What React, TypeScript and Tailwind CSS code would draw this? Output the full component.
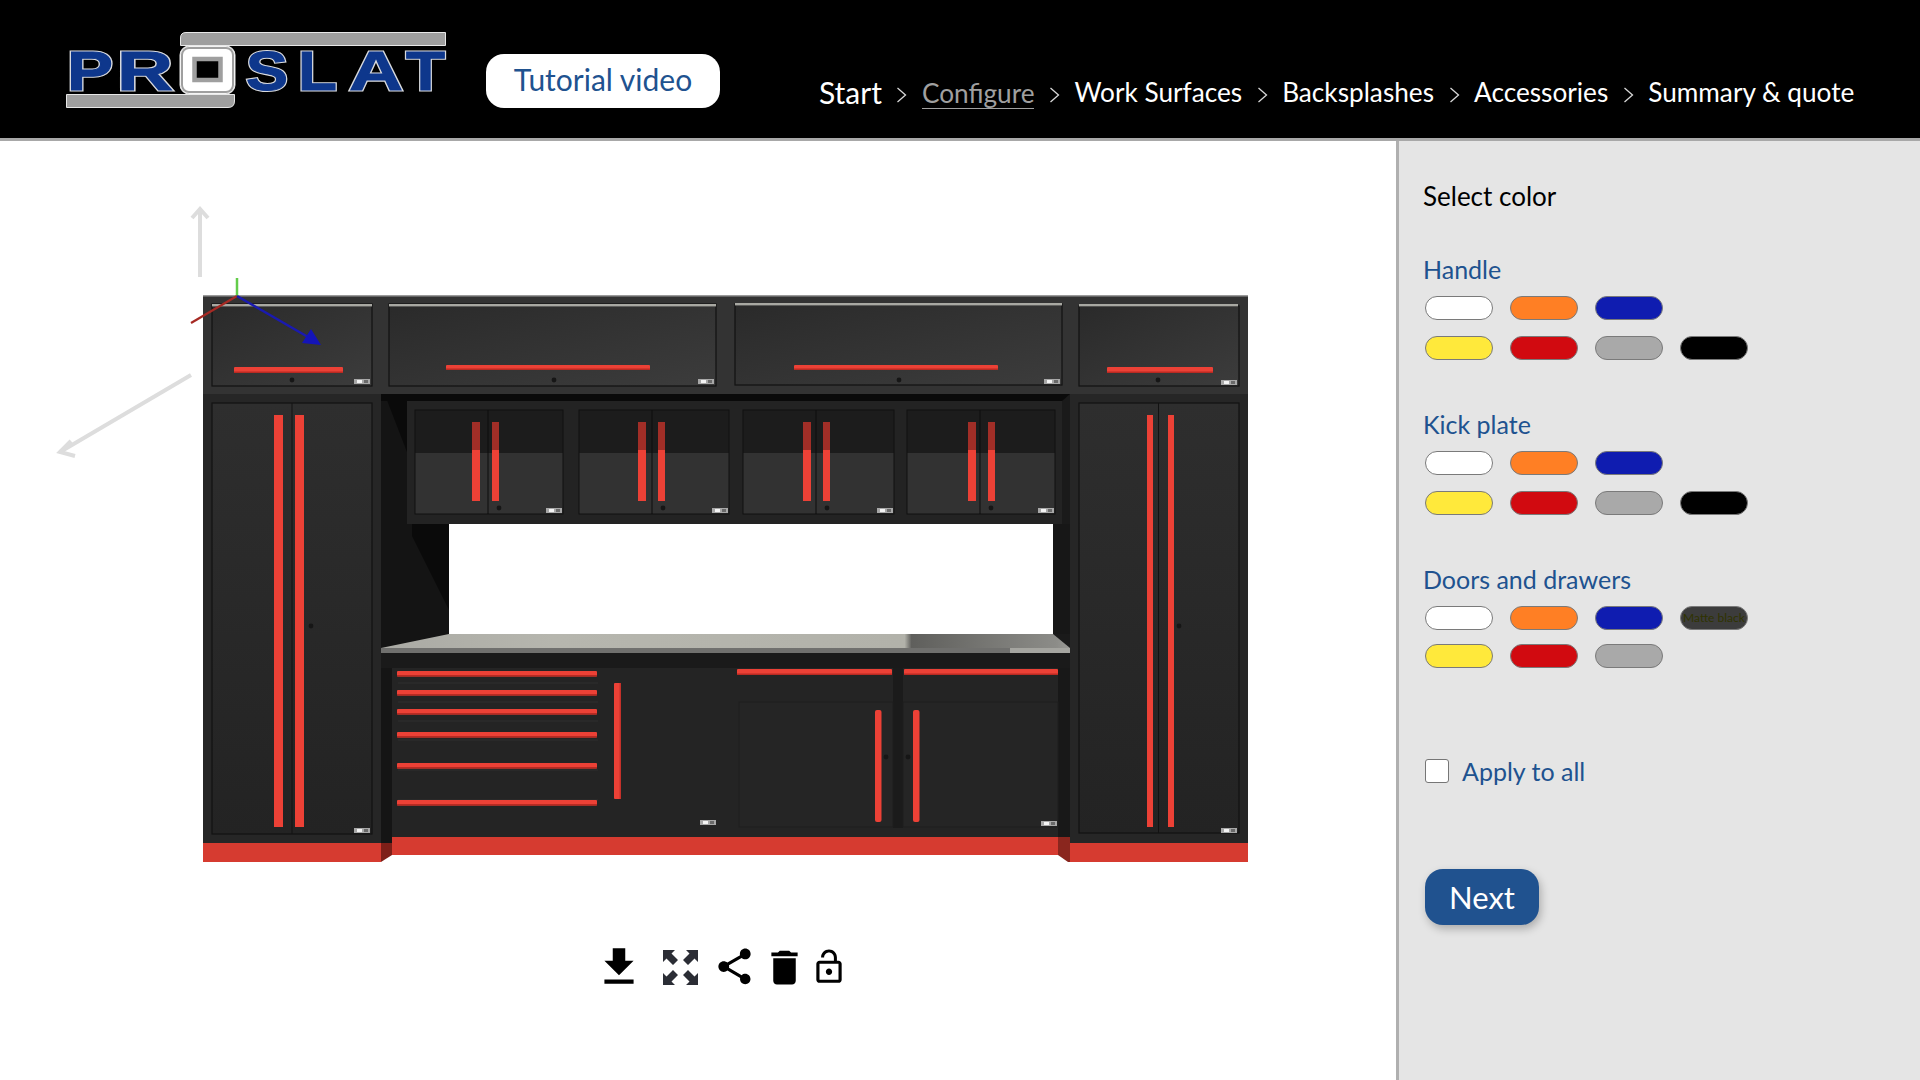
type Swatch = { color: string; label?: string } | null;

const white = { color: "#ffffff" };
const orange = { color: "#ff7f24" };
const blue = { color: "#0f1cb0" };
const yellow = { color: "#ffe93b" };
const red = { color: "#d10a10" };
const gray = { color: "#a9a9a9" };
const black = { color: "#000000" };
const matte = { color: "#3c3c3c", label: "Matte black" };

const groups: { title: string; rows: Swatch[][]; className: string; rowGap: string }[] = [
  { title: "Handle", rows: [[white, orange, blue, null], [yellow, red, gray, black]], className: "mt-[36px]", rowGap: "gap-[16px]" },
  { title: "Kick plate", rows: [[white, orange, blue, null], [yellow, red, gray, black]], className: "mt-[47px]", rowGap: "gap-[16px]" },
  { title: "Doors and drawers", rows: [[white, orange, blue, matte], [yellow, red, gray, null]], className: "mt-[47px]", rowGap: "gap-[14px]" }
];

const steps = ["Configure", "Work Surfaces", "Backsplashes", "Accessories", "Summary & quote"];

const HANDLE = "#ec4136";

function LogoLetter({ x, w, children }: { x: number; w: number; children: string }) {
  const base = {
    x: x + 1,
    y: 90,
    textLength: w - 2,
    lengthAdjust: "spacingAndGlyphs" as const,
    fontFamily: "'Liberation Sans', sans-serif",
    fontWeight: 700,
    fontSize: 56
  };
  return (
    <g>
      <text {...base} fill="#d8dade" stroke="#d8dade" strokeWidth="3.2">{children}</text>
      <text {...base} fill="#0e378c" stroke="#0e378c" strokeWidth="1">{children}</text>
    </g>
  );
}

function Logo() {
  return (
    <svg width="381" height="78" viewBox="66 32 381 78" className="shrink-0">
      <path d="M186 32.5H445.5V45.5H180.5V38Q180.5 32.5 186 32.5Z" fill="#9f9f9f" stroke="#e8e8e8" strokeWidth="1" />
      <path d="M66.5 94.5H234.5V101Q234.5 107.5 228 107.5H66.5Z" fill="#9f9f9f" stroke="#e8e8e8" strokeWidth="1" />
      <LogoLetter x={66} w={48}>P</LogoLetter>
      <LogoLetter x={116} w={58}>R</LogoLetter>
      <rect x="180" y="46" width="55" height="48" rx="9" fill="#ffffff" stroke="#e8e8e8" strokeWidth="1" />
      <rect x="182" y="48" width="51" height="44" rx="7" fill="#ffffff" stroke="#9f9f9f" strokeWidth="2" />
      <rect x="194.5" y="59" width="26" height="21" fill="#000000" stroke="#9f9f9f" strokeWidth="4.5" />
      <LogoLetter x={245} w={44}>S</LogoLetter>
      <LogoLetter x={297} w={41}>L</LogoLetter>
      <LogoLetter x={348} w={56}>A</LogoLetter>
      <LogoLetter x={405} w={41}>T</LogoLetter>
    </svg>
  );
}

function Door({ x, y, w, h, fill = "url(#doorUpper)", edge = "#121212" }: { x: number; y: number; w: number; h: number; fill?: string; edge?: string }) {
  return <rect x={x} y={y} width={w} height={h} fill={fill} stroke={edge} strokeWidth="1.2" />;
}

function Badge({ x, y }: { x: number; y: number }) {
  return (
    <g>
      <rect x={x} y={y} width="16" height="5" fill="#a8a8a8" />
      <rect x={x + 3} y={y + 1} width="5" height="3" fill="#f4f4f4" />
      <rect x={x + 10} y={y + 1} width="4" height="3" fill="#6a6a6a" />
    </g>
  );
}

function Bar({ x, y, w, h }: { x: number; y: number; w: number; h: number }) {
  return (
    <g>
      <rect x={x} y={y} width={w} height={h} rx="1" fill={HANDLE} />
      {w > h ? (
        <rect x={x} y={y + h - 1.5} width={w} height="1.5" fill="#b92a22" />
      ) : (
        <rect x={x + w - 1.5} y={y} width="1.5" height={h} fill="#c5312a" />
      )}
    </g>
  );
}

function Knob({ x, y }: { x: number; y: number }) {
  return <circle cx={x} cy={y} r="2.4" fill="#161616" />;
}

function CabinetCanvas() {
  const overhead = [
    { x: 415, w: 148, h: [472, 492] },
    { x: 579, w: 150, h: [638, 658] },
    { x: 743, w: 151, h: [803, 823] },
    { x: 907, w: 148, h: [968, 988] }
  ];
  const drawers = [671, 690, 709, 732, 763, 800];
  return (
    <svg width="1396" height="789" viewBox="0 141 1396 789" className="block blur-[0.5px]">
      <defs>
        <linearGradient id="doorUpper" x1="0" y1="0" x2="1" y2="1">
          <stop offset="0" stopColor="#2a2a2a" />
          <stop offset="1" stopColor="#3c3c3c" />
        </linearGradient>
        <linearGradient id="tower" x1="0" y1="0" x2="0" y2="1">
          <stop offset="0" stopColor="#2e2e2e" />
          <stop offset="1" stopColor="#232323" />
        </linearGradient>
        <linearGradient id="counter" x1="0" y1="0" x2="1" y2="0">
          <stop offset="0" stopColor="#aaaaa4" />
          <stop offset="0.25" stopColor="#b6b6ae" />
          <stop offset="0.76" stopColor="#b2b2aa" />
          <stop offset="0.77" stopColor="#5f5f5c" />
          <stop offset="0.98" stopColor="#8c8c88" />
          <stop offset="1" stopColor="#9a9a96" />
        </linearGradient>
      </defs>

      {/* gray direction arrows */}
      <g stroke="#dddddd" strokeWidth="4" fill="none">
        <path d="M200 277V210" />
        <path d="M192 218L200 209L208 218" />
        <path d="M191 375L60 452" />
        <path d="M71 441L60 452L75 456" />
      </g>

      {/* kick plates */}
      <rect x="381" y="837" width="689" height="18" fill="#d63b30" />
      <path d="M381 843L392 837V855L381 862Z" fill="#7e1f18" />
      <path d="M1058 837H1070V862H1068L1058 855Z" fill="#8a261e" />
      <rect x="203" y="843" width="178" height="19" fill="#d63b30" />
      <rect x="1070" y="843" width="178" height="19" fill="#d63b30" />

      {/* carcass */}
      <rect x="203" y="295" width="1045" height="108" fill="#333333" />
      <rect x="203" y="295" width="1045" height="1.5" fill="#9a9a9a" />
      <rect x="203" y="394" width="178" height="449" fill="#262626" />
      <rect x="1070" y="394" width="178" height="449" fill="#262626" />
      <rect x="381" y="394" width="689" height="443" fill="#1a1a1a" />

      {/* side wall, overhead frame and backsplash opening */}
      <rect x="381" y="394" width="68" height="254" fill="#141414" />
      <path d="M385 395H407V452Z" fill="#0a0a0a" />
      <path d="M412 524H449V610L412 536Z" fill="#0a0a0a" />
      <path d="M381 394H1070L1062 401H381Z" fill="#0a0a0a" />
      <rect x="407" y="401" width="655" height="123" fill="#232323" />
      <rect x="449" y="524" width="604" height="110" fill="#ffffff" />
      <rect x="1053" y="524" width="17" height="110" fill="#171717" />

      {/* upper doors */}
      <Door x={212} y={304} w={160} h={82} />
      <Door x={389} y={304} w={327} h={82} />
      <Door x={735} y={304} w={327} h={81} />
      <Door x={1079} y={306} w={160} h={80} />
      {[[212, 372, 304], [389, 716, 304], [735, 1062, 303], [1079, 1238, 304]].map(([a, b, y]) => (
        <rect key={a} x={a} y={y} width={b - a} height="2.4" fill="#a8a8a2" />
      ))}
      <Bar x={234} y={367} w={109} h={6} />
      <Bar x={446} y={365} w={204} h={5} />
      <Bar x={794} y={365} w={204} h={5} />
      <Bar x={1107} y={367} w={106} h={6} />
      {[292, 554, 899, 1158].map((x) => (
        <Knob key={x} x={x} y={380} />
      ))}
      {[[354, 379], [698, 379], [1044, 379], [1221, 380]].map(([x, y]) => (
        <Badge key={x} x={x} y={y} />
      ))}

      {/* overhead units */}
      {overhead.map((u) => (
        <g key={u.x}>
          <rect x={u.x} y={410} width={u.w} height={43} fill="#1c1c1c" />
          <rect x={u.x} y={453} width={u.w} height={61} fill="#323232" />
          <rect x={u.x} y={410} width={u.w} height={104} fill="none" stroke="#111111" />
          <line x1={u.x + 73} y1={410} x2={u.x + 73} y2={514} stroke="#0d0d0d" />
          {u.h.map((x, i) => (
            <g key={x}>
              <rect x={x} y={422} width={i === 0 ? 8 : 7} height={79} fill={HANDLE} />
              <rect x={x} y={422} width={i === 0 ? 8 : 7} height={28} fill="#a12e27" />
            </g>
          ))}
          <Knob x={u.x + 84} y={508} />
          <Badge x={u.x + u.w - 17} y={508} />
        </g>
      ))}

      {/* towers */}
      <Door x={212} y={403} w={160} h={431} fill="url(#tower)" />
      <Door x={1079} y={403} w={160} h={430} fill="url(#tower)" />
      <line x1={292} y1={403} x2={292} y2={834} stroke="#121212" />
      <line x1={1158.5} y1={403} x2={1158.5} y2={833} stroke="#121212" />
      <rect x={274} y={415} width={9} height={412} fill={HANDLE} />
      <rect x={295} y={415} width={9} height={412} fill={HANDLE} />
      <rect x={1147} y={415} width={6} height={412} fill={HANDLE} />
      <rect x={1168} y={415} width={6} height={412} fill={HANDLE} />
      <Badge x={354} y={828} />
      <Badge x={1221} y={828} />
      <Knob x={311} y={626} />
      <Knob x={1179} y={626} />

      {/* countertop */}
      <path d="M449 634H1053L1070 648H381Z" fill="url(#counter)" />
      <rect x="381" y="648" width="689" height="5" fill="#70706e" />
      <rect x="1010" y="648" width="60" height="5" fill="#a5a5a0" />

      {/* base units */}
      <rect x="392" y="653" width="666" height="184" fill="#242424" />
      <rect x="381" y="653" width="689" height="15" fill="#1a1a1a" />
      <rect x="381" y="668" width="11" height="175" fill="#151515" />
      <rect x="1058" y="668" width="12" height="169" fill="#181818" />
      {[664, 683, 702, 721, 751, 781].map((y) => (
        <line key={y} x1={398} y1={y + 19} x2={598} y2={y + 19} stroke="#2e2e2e" />
      ))}
      {drawers.map((y) => (
        <Bar key={y} x={397} y={y} w={200} h={5.5} />
      ))}
      <Bar x={614} y={683} w={7} h={116} />
      <rect x="893" y="668" width="10" height="160" fill="#1b1b1b" />
      <rect x="739" y="702" width="154" height="125" fill="#252525" stroke="#1e1e1e" />
      <rect x="903" y="702" width="155" height="125" fill="#252525" stroke="#1e1e1e" />
      <Bar x={737} y={669} w={155} h={6} />
      <Bar x={904} y={669} w={154} h={6} />
      <rect x={875} y={710} width={6.5} height={112} rx="2" fill={HANDLE} />
      <rect x={913} y={710} width={6.5} height={112} rx="2" fill={HANDLE} />
      <Knob x={886} y={757} />
      <Knob x={908} y={757} />
      <Badge x={700} y={820} />
      <Badge x={1041} y={821} />

      {/* scene axes */}
      <line x1="237" y1="296" x2="237" y2="278" stroke="#63cc4a" strokeWidth="2.5" />
      <line x1="237" y1="296" x2="191" y2="323" stroke="#a62a24" strokeWidth="2.2" />
      <line x1="237" y1="296" x2="308" y2="337" stroke="#1a1ab0" strokeWidth="2.5" />
      <path d="M311 329L321 345L302 343Z" fill="#1414b8" />
    </svg>
  );
}

function ExpandIcon() {
  const corner = "M0 0H12L8.5 3.5L15 10L10 15L3.5 8.5L0 12Z";
  return (
    <svg width="35" height="35" viewBox="0 0 35 35" fill="#2b2d35" className="ml-[19px] mt-[1px] shrink-0">
      <path d={corner} />
      <path d={corner} transform="matrix(-1 0 0 1 35 0)" />
      <path d={corner} transform="matrix(1 0 0 -1 0 35)" />
      <path d={corner} transform="matrix(-1 0 0 -1 35 35)" />
    </svg>
  );
}

function Toolbar() {
  return (
    <div className="flex h-[60px] items-center pl-[594px] pt-[14px] text-black">
      <svg width="50" height="50" viewBox="0 0 24 24" fill="currentColor" className="mt-[-1px] shrink-0">
        <path d="M19 9h-4V3H9v6H5l7 7 7-7zM5 18v2h14v-2H5z" />
      </svg>
      <ExpandIcon />
      <svg width="43" height="43" viewBox="0 0 24 24" fill="currentColor" className="ml-[15px] mt-[-2px] shrink-0">
        <path d="M18 16.08c-.76 0-1.44.3-1.96.77L8.91 12.7c.05-.23.09-.46.09-.7s-.04-.47-.09-.7l7.05-4.11c.54.5 1.25.81 2.04.81 1.66 0 3-1.34 3-3s-1.34-3-3-3-3 1.34-3 3c0 .24.04.47.09.7L8.04 9.81C7.5 9.31 6.79 9 6 9c-1.66 0-3 1.34-3 3s1.34 3 3 3c.79 0 1.5-.31 2.04-.81l7.12 4.16c-.05.21-.08.43-.08.65 0 1.61 1.31 2.92 2.92 2.92 1.61 0 2.92-1.31 2.92-2.92s-1.31-2.92-2.92-2.92z" />
      </svg>
      <svg width="45" height="45" viewBox="0 0 24 24" fill="currentColor" className="ml-[6px] mt-[1px] shrink-0">
        <path d="M6 19c0 1.1.9 2 2 2h8c1.1 0 2-.9 2-2V7H6v12zM19 4h-3.5l-1-1h-5l-1 1H5v2h14V4z" />
      </svg>
      <svg width="38" height="38" viewBox="0 0 24 24" fill="currentColor" className="ml-[3px] mt-[-1px] shrink-0">
        <path d="M12 17c1.1 0 2-.9 2-2s-.9-2-2-2-2 .9-2 2 .9 2 2 2zm6-9h-1V6c0-2.76-2.24-5-5-5S7 3.24 7 6h1.9c0-1.71 1.39-3.1 3.1-3.1 1.71 0 3.1 1.39 3.1 3.1v2H6c-1.1 0-2 .9-2 2v10c0 1.1.9 2 2 2h12c1.1 0 2-.9 2-2V10c0-1.1-.9-2-2-2zm0 12H6V10h12v10z" />
      </svg>
    </div>
  );
}

function Chevron() {
  return (
    <svg width="11" height="18" viewBox="0 0 11 18" className="mx-[14.5px] mt-[5px] shrink-0" fill="none" stroke="#d8d8d8" strokeWidth="1.3">
      <path d="M1.5 2L9.5 9L1.5 16" />
    </svg>
  );
}

export default function App() {
  return (
    <div className="flex h-[1080px] w-[1920px] flex-col overflow-hidden bg-white font-['Lato',sans-serif]">
      <header className="flex h-[141px] shrink-0 items-start border-b-[3px] border-[#a8a8a8] bg-black pl-[66px] pt-[32px]">
        <Logo />
        <button className="ml-[39px] mt-[22px] h-[54px] w-[234px] rounded-[18px] bg-white pb-[5px] text-[30px] leading-none text-[#20528f]">
          Tutorial video
        </button>
        <nav className="ml-[99px] mt-[40px] flex h-[40px] items-center text-[26.2px] text-white">
          <span className="text-[30px]">Start</span>
          {steps.map((step) => (
            <span key={step} className="flex items-center">
              <Chevron />
              <span className={step === "Configure" ? "mt-[2px] border-b border-[#a0a0a0] leading-[30px] text-[#a0a0a0]" : "mt-[2px]"}>{step}</span>
            </span>
          ))}
        </nav>
      </header>
      <div className="flex min-h-0 flex-1">
        <main className="w-[1396px] shrink-0 bg-white">
          <CabinetCanvas />
          <Toolbar />
        </main>
        <aside className="flex-1 border-l-[3px] border-[#b0b0b0] bg-[#e5e5e5] pl-[24px] pt-[35px]">
          <h2 className="text-[26px] leading-[40px] text-black">Select color</h2>
          {groups.map((group) => (
            <section key={group.title} className={group.className}>
              <h3 className="text-[25px] leading-[34px] text-[#20528f]">{group.title}</h3>
              <div className={`mt-[10px] flex flex-col pl-[2px] ${group.rowGap}`}>
                {group.rows.map((row, i) => (
                  <div key={i} className="flex gap-[17px]">
                    {row.map((swatch, j) =>
                      swatch ? (
                        <div
                          key={j}
                          className="flex h-[24px] w-[68px] items-center justify-center whitespace-nowrap rounded-full border border-[#7a7a7a] text-[12px] text-[#2f3300]"
                          style={{ backgroundColor: swatch.color }}
                        >
                          {swatch.label}
                        </div>
                      ) : (
                        <div key={j} className="h-[24px] w-[68px]" />
                      )
                    )}
                  </div>
                ))}
              </div>
            </section>
          ))}
          <label className="ml-[2px] mt-[86px] flex items-center gap-[13px] text-[25px] leading-[34px] text-[#20528f]">
            <span className="h-[24px] w-[24px] rounded-[3px] border border-[#767676] bg-white" />
            Apply to all
          </label>
          <button className="ml-[2px] mt-[81px] h-[56px] w-[114px] rounded-[18px] bg-[#20528f] text-[31px] leading-none text-white shadow-[2px_4px_8px_rgba(0,0,0,0.25)]">
            Next
          </button>
        </aside>
      </div>
    </div>
  );
}
